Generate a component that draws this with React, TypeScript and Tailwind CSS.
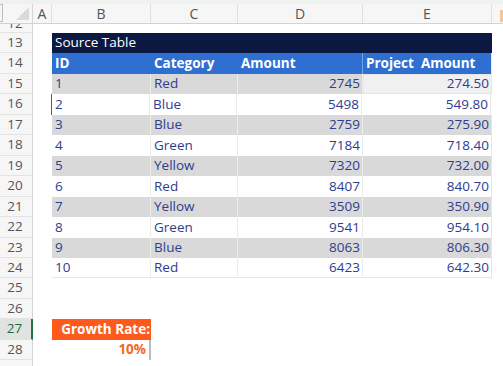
import React from "react";

const ROW_H = "h-[20.46px]";
const data = [
  [1, "Red", 2745, "274.50"],
  [2, "Blue", 5498, "549.80"],
  [3, "Blue", 2759, "275.90"],
  [4, "Green", 7184, "718.40"],
  [5, "Yellow", 7320, "732.00"],
  [6, "Red", 8407, "840.70"],
  [7, "Yellow", 3509, "350.90"],
  [8, "Green", 9541, "954.10"],
  [9, "Blue", 8063, "806.30"],
  [10, "Red", 6423, "642.30"],
];

function RowHdr({ n, active }: { n?: number; active?: boolean }) {
  return (
    <div
      className={`w-[33px] shrink-0 ${ROW_H} flex items-center justify-center border-b border-[#e3e3e3] pr-[2px] ${
        active ? "bg-[#e1e3e1] text-[#1e6b3f] border-r-2 border-r-[#217346]" : "bg-[#f6f6f6] text-[#555] border-r border-r-[#d6d6d6]"
      }`}
    >
      {n}
    </div>
  );
}

export default function App() {
  return (
    <div
      className="w-[503px] h-[366px] overflow-hidden bg-white text-[13.5px] leading-none"
      style={{ fontFamily: '"Open Sans", "Noto Sans", sans-serif' }}
    >
      <div className="h-[4px] bg-[#eef2ee]" />
      {/* column header */}
      <div className="flex h-[20px] bg-[#f6f6f6] border-b border-[#d2d2d2] text-[#555] text-[14px]">
        <div className="w-[33px] shrink-0 border-r border-[#d6d6d6] relative">
          <div className="absolute left-0 top-0 w-[3px] h-[18px] border border-[#bdbdbd] border-l-0" />
          <div className="absolute right-[3px] bottom-[3px] w-0 h-0 border-l-[13px] border-l-transparent border-b-[13px] border-b-[#dadada]" />
        </div>
        {[
          ["A", "w-[19px]"],
          ["B", "w-[99px]"],
          ["C", "w-[87px]"],
          ["D", "w-[125px]"],
          ["E", "w-[129px]"],
        ].map(([l, w]) => (
          <div key={l} className={`${w} shrink-0 flex items-center justify-center border-r border-[#e0e0e0]`}>
            {l}
          </div>
        ))}
        <div className="flex-1 relative">
          <div className="absolute left-[8px] top-[6px] w-[4px] h-[12px] bg-[#f7c58f]" />
        </div>
      </div>
      {/* row 12 partial */}
      <div className="flex h-[9px]">
        <div className="w-[33px] shrink-0 bg-[#f6f6f6] border-r border-[#d6d6d6] border-b border-b-[#e3e3e3] overflow-hidden relative text-[#555]">
          <span className="absolute left-0 right-[2px] text-center bottom-[2px] leading-[14px]">12</span>
        </div>
      </div>
      {/* row 13 */}
      <div className="flex">
        <RowHdr n={13} />
        <div className="w-[19px] shrink-0" />
        <div className={`w-[440px] shrink-0 ${ROW_H} bg-[#0b1842] text-white flex items-center pl-[3px]`}>
          Source Table
        </div>
      </div>
      {/* row 14 */}
      <div className="flex">
        <RowHdr n={14} />
        <div className="w-[19px] shrink-0" />
        <div className={`flex ${ROW_H} bg-[#2f6fd1] text-white font-bold`}>
          <div className="w-[99px] flex items-center pl-[3px]">ID</div>
          <div className="w-[87px] flex items-center pl-[3px]">Category</div>
          <div className="w-[125px] flex items-center pl-[3px] border-r border-[#7aa3e3]">Amount</div>
          <div className="w-[129px] flex items-center pl-[3px] border-r border-[#e8e8e8]">Project&nbsp; Amount</div>
        </div>
      </div>
      {data.map((r, i) => {
        const gray = i % 2 === 0;
        const bg = gray ? "bg-[#d9d9d9]" : "bg-white";
        const last = i === data.length - 1;
        return (
          <div key={i} className="flex">
            <RowHdr n={15 + i} />
            <div className="w-[19px] shrink-0" />
            <div className={`flex ${ROW_H} ${bg} text-[#2e3d8f] ${last ? "border-b border-[#e6e6e6]" : ""}`}>
              <div className={`w-[99px] flex items-center pl-[3px] border-r border-[#ececec] ${i === 1 ? "border-l border-l-[#4a5a9a] -ml-px" : ""}`}>
                {r[0]}
              </div>
              <div className="w-[87px] flex items-center pl-[3px] border-r border-[#ececec]">{r[1]}</div>
              <div className="w-[125px] flex items-center justify-end pr-[2px] border-r border-[#ececec]">{r[2]}</div>
              <div
                className={`w-[129px] flex items-center justify-end pr-[2px] border-r border-[#e6e6e6] ${
                  i === 0 ? "bg-[#f0f0f0] border border-[#c4c4c4]" : ""
                }`}
              >
                {r[3]}
              </div>
            </div>
          </div>
        );
      })}
      {[25, 26].map((n) => (
        <div key={n} className="flex">
          <RowHdr n={n} />
        </div>
      ))}
      <div className="flex">
        <RowHdr n={27} active />
        <div className="w-[19px] shrink-0" />
        <div className={`w-[99px] ${ROW_H} bg-[#fe5a1d] text-white font-bold flex items-center justify-end pr-[1px]`}>
          Growth Rate:
        </div>
      </div>
      <div className="flex">
        <RowHdr n={28} />
        <div className="w-[19px] shrink-0" />
        <div className={`w-[99px] ${ROW_H} text-[#f26a22] font-bold flex items-center justify-end pr-[3px] border-r-2 border-[#bdbdbd]`}>
          10%
        </div>
      </div>
      <div className="flex">
        <RowHdr />
      </div>
    </div>
  );
}
